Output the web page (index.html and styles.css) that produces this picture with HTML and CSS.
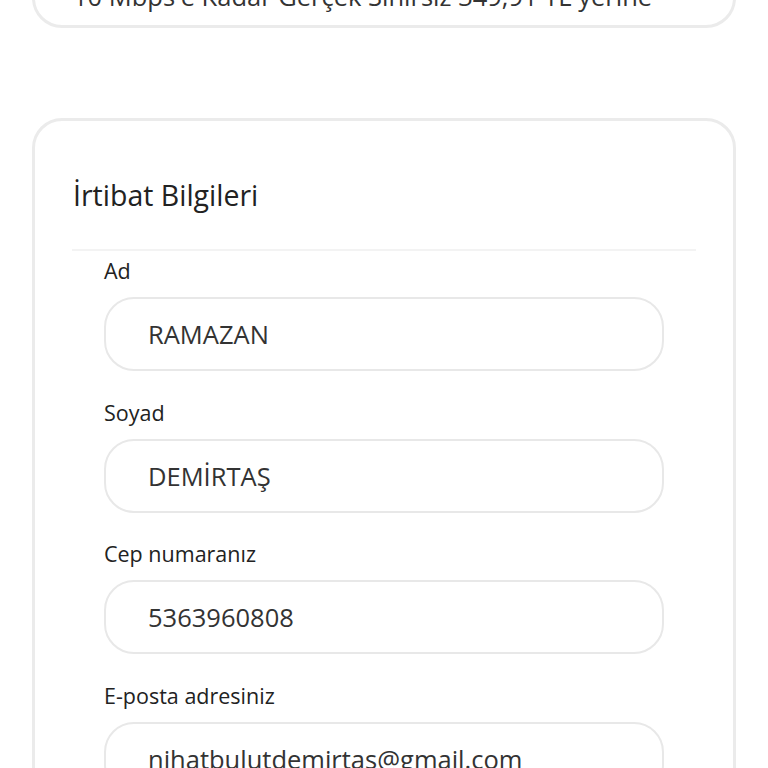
FILE: index.html
```html
<!DOCTYPE html>
<html lang="tr">
<head>
    <meta charset="UTF-8">
    <meta name="viewport" content="width=device-width, initial-scale=1.0">
    <title>İrtibat Bilgileri</title>
    <link rel="stylesheet" href="styles.css">
</head>
<body>
    <div class="sayfa">
        <div class="kart kart-paket">
            <p class="paket-metin">10 Mbps'e Kadar Gerçek Sınırsız 349,91 TL yerine</p>
        </div>

        <form class="kart kart-form" id="irtibat">
            <h2 class="baslik">İrtibat Bilgileri</h2>
            <div class="ayirici"></div>

            <div class="alanlar">
                <div class="alan">
                    <label for="ad">Ad</label>
                    <input type="text" id="ad" name="ad" value="RAMAZAN">
                </div>
                <div class="alan">
                    <label for="soyad">Soyad</label>
                    <input type="text" id="soyad" name="soyad" value="DEMİRTAŞ">
                </div>
                <div class="alan">
                    <label for="telefon">Cep numaranız</label>
                    <input type="text" id="telefon" name="telefon" value="5363960808">
                </div>
                <div class="alan">
                    <label for="email">E-posta adresiniz</label>
                    <input type="email" id="email" name="email" value="nihatbulutdemirtas@gmail.com">
                </div>
            </div>
        </form>
    </div>
</body>
</html>
```

FILE: styles.css
```css
body {
    margin: 0;
    background-color: #ffffff;
    font-family: "Open Sans", "Noto Sans", sans-serif;
    color: #222222;
}

.sayfa {
    margin-top: -43px;
    padding: 0 32px;
}

.kart {
    background-color: #ffffff;
    border: 3px solid #ebebeb;
    border-radius: 30px;
}

.kart-paket {
    padding: 20px 38px 12px;
}

.paket-metin {
    margin: 0;
    font-size: 25.5px;
    line-height: 33px;
    color: #333333;
}

.kart-form {
    margin-top: 90px;
    padding: 55px 37px 0;
}

.baslik {
    margin: 0 0 0 1px;
    font-size: 28.5px;
    font-weight: 400;
    line-height: 38px;
    color: #222222;
}

.ayirici {
    height: 2px;
    background-color: #f3f3f3;
    margin-top: 35px;
}

.alanlar {
    display: flex;
    flex-direction: column;
    gap: 27.5px;
    padding: 6px 32px 40px;
}

.alan {
    display: flex;
    flex-direction: column;
    gap: 12px;
}

.alan label {
    font-size: 21.5px;
    line-height: 28px;
    color: #222222;
}

.alan input {
    box-sizing: border-box;
    width: 100%;
    height: 74px;
    padding: 0 42px;
    border: 2px solid #e8e8e8;
    border-radius: 30px;
    font-family: "Open Sans", "Noto Sans", sans-serif;
    font-size: 25.5px;
    color: #333333;
    background-color: #ffffff;
    outline: none;
}
```
